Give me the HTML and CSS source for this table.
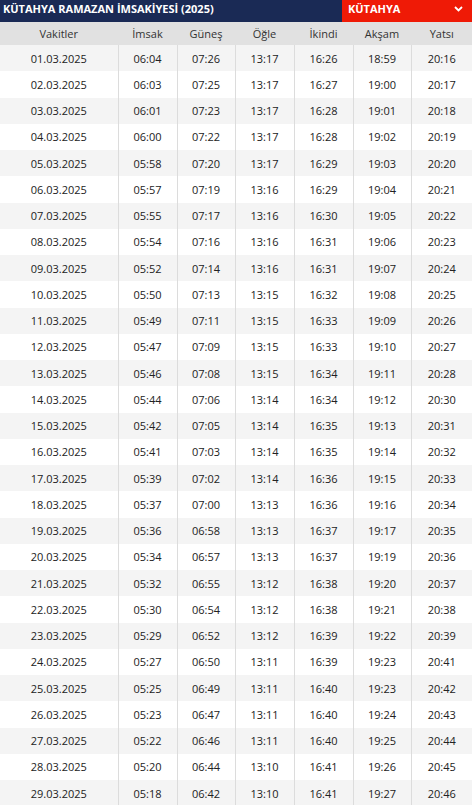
FILE: index.html
```html
<!DOCTYPE html>
<html lang="tr">
<head>
<meta charset="utf-8">
<title>Kütahya Ramazan İmsakiyesi (2025)</title>
<link rel="stylesheet" href="styles.css">
</head>
<body>
<div class="page">
  <div class="topbar">
    <h1 class="title">KÜTAHYA RAMAZAN İMSAKİYESİ (2025)</h1>
    <div class="city">
      <span class="city-name">KÜTAHYA</span>
      <svg class="chev" width="9" height="6" viewBox="0 0 9 6"><path d="M1 1 L4.5 4.5 L8 1" fill="none" stroke="#fff" stroke-width="1.8"/></svg>
    </div>
  </div>
  <table class="times">
    <colgroup>
      <col class="c-date"><col class="c1"><col class="c2"><col class="c3"><col class="c4"><col class="c5"><col class="c6">
    </colgroup>
    <thead>
      <tr><th>Vakitler</th><th>İmsak</th><th>Güneş</th><th>Öğle</th><th>İkindi</th><th>Akşam</th><th>Yatsı</th></tr>
    </thead>
    <tbody>
      <tr><td>01.03.2025</td><td>06:04</td><td>07:26</td><td>13:17</td><td>16:26</td><td>18:59</td><td>20:16</td></tr>
      <tr><td>02.03.2025</td><td>06:03</td><td>07:25</td><td>13:17</td><td>16:27</td><td>19:00</td><td>20:17</td></tr>
      <tr><td>03.03.2025</td><td>06:01</td><td>07:23</td><td>13:17</td><td>16:28</td><td>19:01</td><td>20:18</td></tr>
      <tr><td>04.03.2025</td><td>06:00</td><td>07:22</td><td>13:17</td><td>16:28</td><td>19:02</td><td>20:19</td></tr>
      <tr><td>05.03.2025</td><td>05:58</td><td>07:20</td><td>13:17</td><td>16:29</td><td>19:03</td><td>20:20</td></tr>
      <tr><td>06.03.2025</td><td>05:57</td><td>07:19</td><td>13:16</td><td>16:29</td><td>19:04</td><td>20:21</td></tr>
      <tr><td>07.03.2025</td><td>05:55</td><td>07:17</td><td>13:16</td><td>16:30</td><td>19:05</td><td>20:22</td></tr>
      <tr><td>08.03.2025</td><td>05:54</td><td>07:16</td><td>13:16</td><td>16:31</td><td>19:06</td><td>20:23</td></tr>
      <tr><td>09.03.2025</td><td>05:52</td><td>07:14</td><td>13:16</td><td>16:31</td><td>19:07</td><td>20:24</td></tr>
      <tr><td>10.03.2025</td><td>05:50</td><td>07:13</td><td>13:15</td><td>16:32</td><td>19:08</td><td>20:25</td></tr>
      <tr><td>11.03.2025</td><td>05:49</td><td>07:11</td><td>13:15</td><td>16:33</td><td>19:09</td><td>20:26</td></tr>
      <tr><td>12.03.2025</td><td>05:47</td><td>07:09</td><td>13:15</td><td>16:33</td><td>19:10</td><td>20:27</td></tr>
      <tr><td>13.03.2025</td><td>05:46</td><td>07:08</td><td>13:15</td><td>16:34</td><td>19:11</td><td>20:28</td></tr>
      <tr><td>14.03.2025</td><td>05:44</td><td>07:06</td><td>13:14</td><td>16:34</td><td>19:12</td><td>20:30</td></tr>
      <tr><td>15.03.2025</td><td>05:42</td><td>07:05</td><td>13:14</td><td>16:35</td><td>19:13</td><td>20:31</td></tr>
      <tr><td>16.03.2025</td><td>05:41</td><td>07:03</td><td>13:14</td><td>16:35</td><td>19:14</td><td>20:32</td></tr>
      <tr><td>17.03.2025</td><td>05:39</td><td>07:02</td><td>13:14</td><td>16:36</td><td>19:15</td><td>20:33</td></tr>
      <tr><td>18.03.2025</td><td>05:37</td><td>07:00</td><td>13:13</td><td>16:36</td><td>19:16</td><td>20:34</td></tr>
      <tr><td>19.03.2025</td><td>05:36</td><td>06:58</td><td>13:13</td><td>16:37</td><td>19:17</td><td>20:35</td></tr>
      <tr><td>20.03.2025</td><td>05:34</td><td>06:57</td><td>13:13</td><td>16:37</td><td>19:19</td><td>20:36</td></tr>
      <tr><td>21.03.2025</td><td>05:32</td><td>06:55</td><td>13:12</td><td>16:38</td><td>19:20</td><td>20:37</td></tr>
      <tr><td>22.03.2025</td><td>05:30</td><td>06:54</td><td>13:12</td><td>16:38</td><td>19:21</td><td>20:38</td></tr>
      <tr><td>23.03.2025</td><td>05:29</td><td>06:52</td><td>13:12</td><td>16:39</td><td>19:22</td><td>20:39</td></tr>
      <tr><td>24.03.2025</td><td>05:27</td><td>06:50</td><td>13:11</td><td>16:39</td><td>19:23</td><td>20:41</td></tr>
      <tr><td>25.03.2025</td><td>05:25</td><td>06:49</td><td>13:11</td><td>16:40</td><td>19:23</td><td>20:42</td></tr>
      <tr><td>26.03.2025</td><td>05:23</td><td>06:47</td><td>13:11</td><td>16:40</td><td>19:24</td><td>20:43</td></tr>
      <tr><td>27.03.2025</td><td>05:22</td><td>06:46</td><td>13:11</td><td>16:40</td><td>19:25</td><td>20:44</td></tr>
      <tr><td>28.03.2025</td><td>05:20</td><td>06:44</td><td>13:10</td><td>16:41</td><td>19:26</td><td>20:45</td></tr>
      <tr><td>29.03.2025</td><td>05:18</td><td>06:42</td><td>13:10</td><td>16:41</td><td>19:27</td><td>20:46</td></tr>
    </tbody>
  </table>
</div>
</body>
</html>
```
FILE: styles.css
```css
html, body {
  margin: 0;
  padding: 0;
  background: #fff;
}
body {
  font-family: "Open Sans", "Noto Sans", sans-serif;
  color: #333;
}
.page {
  width: 472px;
}
.topbar {
  display: flex;
  height: 22px;
  background: #1a2a55;
}
.title {
  flex: 1;
  margin: 0;
  padding-left: 3px;
  font-size: 11px;
  font-weight: 700;
  line-height: 18px;
  color: #fff;
  white-space: nowrap;
}
.city {
  width: 130px;
  display: flex;
  align-items: center;
  justify-content: space-between;
  padding: 0 9px 0 6px;
  box-sizing: border-box;
  background: #ef1a06;
  color: #fff;
}
.city-name {
  font-size: 11px;
  font-weight: 700;
  line-height: 18px;
  margin-top: -4px;
}
.chev {
  display: block;
  margin-top: -5px;
}
.times {
  width: 472px;
  border-collapse: collapse;
  table-layout: fixed;
  font-size: 11px;
}
.c-date { width: 118px; }
.c1 { width: 59px; }
.c2 { width: 58px; }
.c3 { width: 59px; }
.c4 { width: 59px; }
.c5 { width: 58px; }
.c6 { width: 61px; }
.times th,
.times td {
  padding: 0;
  text-align: center;
  border-left: 1px solid #dcdcdc;
}
.times th:first-child,
.times td:first-child {
  border-left: none;
}
.times thead tr {
  height: 23px;
  background: #e1e1e1;
}
.times th {
  font-weight: 400;
  color: #333;
  border-left-color: #e1e1e1;
}
.times tbody tr {
  height: 26.25px;
}
.times tbody tr:nth-child(odd) {
  background: #f4f4f4;
}
.times tbody tr:nth-child(even) {
  background: #fff;
}
.times td {
  color: #222;
}
```
